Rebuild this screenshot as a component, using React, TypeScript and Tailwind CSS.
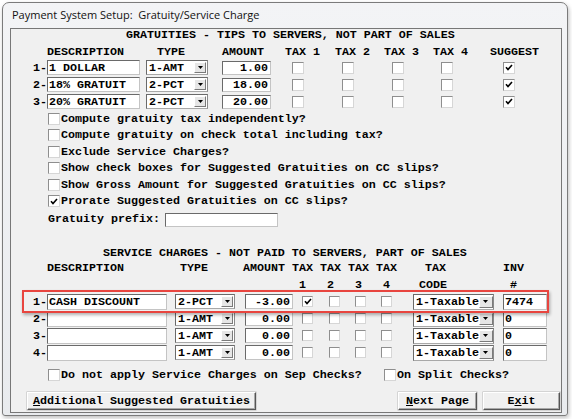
import React from "react";

const Check = () => (
  <svg width="8" height="7" viewBox="0 0 8 7" className="block">
    <polyline points="1,3.2 3,5.5 7,1" fill="none" stroke="#000" strokeWidth="1.6" />
  </svg>
);

function Box({ checked = false, small = false }: { checked?: boolean; small?: boolean }) {
  return (
    <div
      className={
        small
          ? "w-[11px] h-[11px] shrink-0 bg-white border border-t-[#8e8e8e] border-l-[#8e8e8e] border-r-[#d6d6d6] border-b-[#d6d6d6] flex items-center justify-center"
          : "w-[12px] h-[12px] shrink-0 bg-white border border-t-[#8e8e8e] border-l-[#8e8e8e] border-r-[#d6d6d6] border-b-[#d6d6d6] flex items-center justify-center"
      }
    >
      {checked && <Check />}
    </div>
  );
}

const Arrow = () => (
  <svg width="7" height="4" viewBox="0 0 7 4" className="block">
    <polygon points="1,0 6,0 3.5,3" fill="#000" />
  </svg>
);

function DropBtn({ wide = false }: { wide?: boolean }) {
  return (
    <div
      className={
        wide
          ? "w-[14px] h-[12px] shrink-0 bg-[#e6e6e6] border border-t-white border-l-white border-r-[#7a7a7a] border-b-[#7a7a7a] flex items-center justify-center"
          : "w-[12px] h-[11px] shrink-0 bg-[#e6e6e6] border border-t-white border-l-white border-r-[#7a7a7a] border-b-[#7a7a7a] flex items-center justify-center"
      }
    >
      <Arrow />
    </div>
  );
}

function Sel({ text, className, wide = false }: { text: string; className: string; wide?: boolean }) {
  return (
    <div
      className={
        "shrink-0 bg-white border border-t-[#6a6a6a] border-l-[#6a6a6a] border-r-[#8a8a8a] border-b-[#a8a8a8] flex items-center justify-between pl-[2px] pr-[1px] " +
        className
      }
    >
      <span className="whitespace-pre leading-[12px]">{text}</span>
      <DropBtn wide={wide} />
    </div>
  );
}

function Field({ text = "", className, right = false }: { text?: string; className: string; right?: boolean }) {
  return (
    <div
      className={
        "shrink-0 bg-white border border-t-[#6a6a6a] border-l-[#6a6a6a] border-r-[#c4c4c4] border-b-[#c4c4c4] flex items-center leading-[12px] whitespace-pre " +
        (right ? "justify-end pr-[2px] " : "pl-[1px] ") +
        className
      }
    >
      {text}
    </div>
  );
}

const grat = [
  { n: "1-", d: "1 DOLLAR", t: "1-AMT", a: "1.00" },
  { n: "2-", d: "18% GRATUIT", t: "2-PCT", a: "18.00" },
  { n: "3-", d: "20% GRATUIT", t: "2-PCT", a: "20.00" },
];

const opts = [
  { t: "Compute gratuity tax independently?", c: false, h: "h-[17px]" },
  { t: "Compute gratuity on check total including tax?", c: false, h: "h-[16px]" },
  { t: "Exclude Service Charges?", c: false, h: "h-[17px]" },
  { t: "Show check boxes for Suggested Gratuities on CC slips?", c: false, h: "h-[16px]" },
  { t: "Show Gross Amount for Suggested Gratuities on CC slips?", c: false, h: "h-[17px]" },
  { t: "Prorate Suggested Gratuities on CC slips?", c: true, h: "h-[16px]" },
];

const serv = [
  { n: "1-", d: "CASH DISCOUNT", t: "2-PCT", a: "-3.00", c1: true, inv: "7474" },
  { n: "2-", d: "", t: "1-AMT", a: "0.00", c1: false, inv: "0" },
  { n: "3-", d: "", t: "1-AMT", a: "0.00", c1: false, inv: "0" },
  { n: "4-", d: "", t: "1-AMT", a: "0.00", c1: false, inv: "0" },
];

const btn =
  "shrink-0 h-[18px] bg-[#f0f0f0] border border-t-white border-l-white border-r-[#555] border-b-[#555] shadow-[inset_-1px_-1px_0_#a9a9a9,0_0_0_0.5px_#b8b8b8] flex items-center justify-center leading-[12px] whitespace-pre";

export default function App() {
  return (
    <div className="w-[572px] h-[419px] bg-white relative overflow-hidden">
      <div className="ml-[2px] mt-[2px] w-[566px] h-[414px] border border-[#7b7b7b] rounded-t-[7px] rounded-b-[3px] bg-gradient-to-b from-[#f3f4f6] to-[#e9ebee] flex flex-col shadow-[1px_2px_4px_rgba(0,0,0,0.25)]">
        <div className="h-[25px] shrink-0 flex items-center pl-[9px] font-['Open_Sans',sans-serif] text-[11px] text-[#111] whitespace-pre">
          Payment System Setup:  Gratuity/Service Charge
        </div>
        <div className="ml-[7px] w-[552px] h-[385px] border border-[#777] bg-[#f0f0f0] pl-[1px] flex flex-col font-['Liberation_Mono',monospace] font-bold text-[11.67px] text-black">
          {/* Gratuities heading */}
          <div className="h-[12px] leading-[12px] ml-[114px] whitespace-pre">GRATUITIES - TIPS TO SERVERS, NOT PART OF SALES</div>
          <div className="mt-[4px] h-[14px] leading-[14px] flex whitespace-pre">
            <span className="ml-[35px] w-[110px] shrink-0">DESCRIPTION</span>
            <span className="w-[65px] shrink-0">TYPE</span>
            <span className="w-[63px] shrink-0">AMOUNT</span>
            <span className="w-[50px] shrink-0">TAX 1</span>
            <span className="w-[49px] shrink-0">TAX 2</span>
            <span className="w-[49px] shrink-0">TAX 3</span>
            <span className="w-[57px] shrink-0">TAX 4</span>
            <span className="shrink-0">SUGGEST</span>
          </div>
          {grat.map((r) => (
            <div key={r.n} className="h-[17px] flex items-center">
              <span className="ml-[21px] w-[14px] shrink-0 whitespace-pre leading-[12px]">{r.n}</span>
              <Field text={r.d} className="w-[93px] h-[15px]" />
              <Sel text={r.t} className="ml-[6px] w-[62px] h-[15px]" />
              <Field text={r.a} right className="ml-[14px] w-[49px] h-[14px]" />
              <div className="ml-[21px]"><Box /></div>
              <div className="ml-[38px]"><Box /></div>
              <div className="ml-[38px]"><Box /></div>
              <div className="ml-[37px]"><Box /></div>
              <div className="ml-[50px]"><Box checked /></div>
            </div>
          ))}
          {opts.map((o) => (
            <div key={o.t} className={o.h + " flex items-center"}>
              <div className="ml-[36px]"><Box checked={o.c} /></div>
              <span className="ml-[1px] whitespace-pre leading-[12px]">{o.t}</span>
            </div>
          ))}
          <div className="h-[19px] flex items-center">
            <span className="ml-[36px] w-[117px] shrink-0 whitespace-pre leading-[12px]">Gratuity prefix:</span>
            <Field className="w-[113px] h-[14px] mt-[2px]" />
          </div>

          {/* Service charges */}
          <div className="mt-[18px] h-[14px] leading-[14px] ml-[91px] whitespace-pre">SERVICE CHARGES - NOT PAID TO SERVERS, PART OF SALES</div>
          <div className="h-[17px] leading-[17px] flex whitespace-pre">
            <span className="ml-[35px] w-[133px] shrink-0">DESCRIPTION</span>
            <span className="w-[63px] shrink-0">TYPE</span>
            <span className="w-[49px] shrink-0">AMOUNT</span>
            <span className="w-[28px] shrink-0">TAX</span>
            <span className="w-[28px] shrink-0">TAX</span>
            <span className="w-[28px] shrink-0">TAX</span>
            <span className="w-[49px] shrink-0">TAX</span>
            <span className="w-[78px] shrink-0">TAX</span>
            <span className="shrink-0">INV</span>
          </div>
          <div className="h-[16px] leading-[16px] flex whitespace-pre">
            <span className="ml-[287px] w-[28px] shrink-0">1</span>
            <span className="w-[28px] shrink-0">2</span>
            <span className="w-[28px] shrink-0">3</span>
            <span className="w-[36px] shrink-0">4</span>
            <span className="w-[91px] shrink-0">CODE</span>
            <span className="shrink-0">#</span>
          </div>
          {serv.map((r) => (
            <div key={r.n} className="h-[17px] flex items-center">
              <span className="ml-[21px] w-[14px] shrink-0 whitespace-pre leading-[12px]">{r.n}</span>
              <Field text={r.d} className="w-[120px] h-[16px]" />
              <Sel text={r.t} className="ml-[8px] w-[60px] h-[15px]" />
              <Field text={r.a} right className="ml-[10px] w-[48px] h-[15px]" />
              <div className="ml-[9px]"><Box small checked={r.c1} /></div>
              <div className="ml-[16px]"><Box small /></div>
              <div className="ml-[15px]"><Box small /></div>
              <div className="ml-[15px]"><Box small /></div>
              <Sel text="1-Taxable" wide className="ml-[21px] w-[81px] h-[16px]" />
              <Field text={r.inv} className="ml-[9px] w-[44px] h-[16px]" />
            </div>
          ))}
          <div className="mt-[6px] h-[16px] flex items-center">
            <div className="ml-[36px]"><Box /></div>
            <span className="ml-[1px] w-[301px] shrink-0 whitespace-pre leading-[12px]">Do not apply Service Charges on Sep Checks?</span>
            <div className="ml-[22px]"><Box /></div>
            <span className="ml-[1px] whitespace-pre leading-[12px]">On Split Checks?</span>
          </div>
          <div className="mt-[9px] h-[18px] flex">
            <div className={btn + " ml-[15px] w-[229px]"}>
              <span><span className="underline">A</span>dditional Suggested Gratuities</span>
            </div>
            <div className={btn + " ml-[142px] w-[79px]"}>
              <span><span className="underline">N</span>ext Page</span>
            </div>
            <div className={btn + " ml-[6px] w-[77px]"}>
              <span>E<span className="underline">x</span>it</span>
            </div>
          </div>
        </div>
      </div>
      {/* red annotation highlight */}
      <div className="absolute left-[22px] top-[290px] w-[527px] h-[23px] border-2 border-[#e8453f] shadow-[1px_2px_3px_rgba(0,0,0,0.3)]" />
    </div>
  );
}
